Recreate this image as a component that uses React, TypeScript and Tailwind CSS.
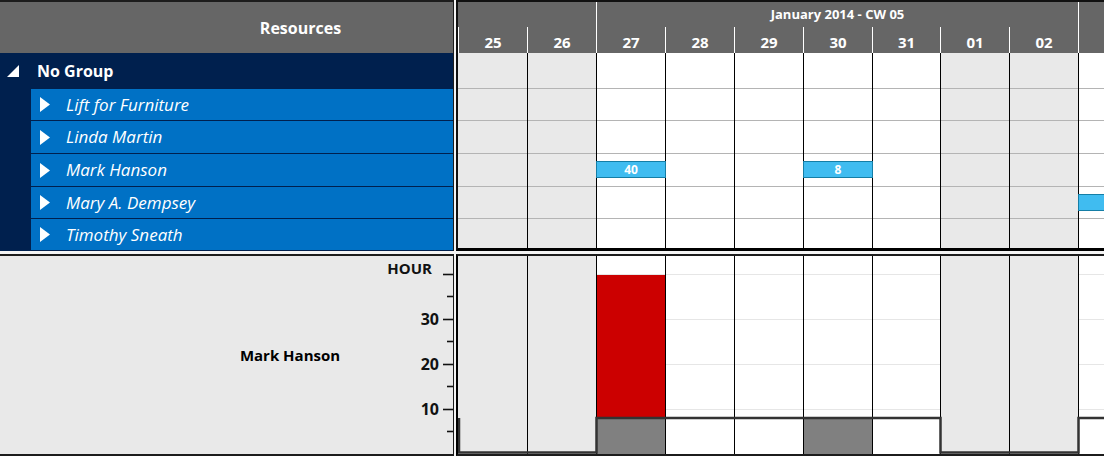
import React from "react";

const days = [
  { label: "25", w: "w-[70px]", weekend: true, first: true },
  { label: "26", w: "w-[69px]", weekend: true },
  { label: "27", w: "w-[69px]" },
  { label: "28", w: "w-[69px]" },
  { label: "29", w: "w-[69px]" },
  { label: "30", w: "w-[69px]" },
  { label: "31", w: "w-[68px]" },
  { label: "01", w: "w-[69px]", weekend: true },
  { label: "02", w: "w-[69px]", weekend: true },
];

// row heights include the 1px bottom line
const rowHeights = ["h-[36px]", "h-[32px]", "h-[33px]", "h-[33px]", "h-[32px]", "h-[29px]"];
const childRowHeights = ["h-[32px]", "h-[33px]", "h-[33px]", "h-[32px]", "h-[32px]"];
const people = ["Lift for Furniture", "Linda Martin", "Mark Hanson", "Mary A. Dempsey", "Timothy Sneath"];

const Bar = ({ label, wide = true }: { label?: string; wide?: boolean }) => (
  <div
    className={`absolute top-[7px] left-[-1px] h-[17px] ${wide ? "w-[70px]" : "w-[27px] h-[16px]"} bg-[#40bcf0] border border-[#157ea6] flex items-center justify-center text-[12px] font-bold text-white leading-none`}
  >
    {label}
  </div>
);

const DayColumn = ({ idx, w, weekend }: { idx: number; w: string; weekend?: boolean }) => (
  <div className={`${w} flex flex-col border-r border-black ${weekend ? "bg-[#e9e9e9]" : "bg-white"}`}>
    {rowHeights.map((h, r) => (
      <div key={r} className={`relative ${h} ${r < rowHeights.length - 1 ? "border-b border-[#b4b4b4]" : ""}`}>
        {r === 3 && idx === 2 && <Bar label="40" />}
        {r === 3 && idx === 5 && <Bar label="8" />}
      </div>
    ))}
  </div>
);

const ResourceTree = () => (
  <div className="w-[454px] h-[251px] border-t-2 border-r border-[#1c1c1c] flex flex-col">
    <div className="h-[51px] bg-[#666666] flex items-center justify-center pl-[148px] text-white text-[16px] font-bold">
      Resources
    </div>
    <div className="h-[36px] bg-[#00204e] flex items-center text-white">
      <svg width="12" height="12" viewBox="0 0 12 12" className="ml-[7px]">
        <polygon points="12,0 12,12 0,12" fill="#fff" />
      </svg>
      <span className="ml-[18px] text-[16px] font-bold">No Group</span>
    </div>
    <div className="flex flex-1 bg-[#00204e]">
      <div className="w-[31px]" />
      <div className="flex-1 flex flex-col">
        {people.map((p, i) => (
          <div
            key={p}
            className={`${childRowHeights[i]} bg-[#0071c5] border-b border-[#00204e] flex items-center text-white`}
          >
            <svg width="10" height="15" viewBox="0 0 10 15" className="ml-[9px]">
              <polygon points="0,0 10,7.5 0,15" fill="#fff" />
            </svg>
            <span className="ml-[16px] text-[17px] italic font-normal">{p}</span>
          </div>
        ))}
      </div>
    </div>
  </div>
);

const Timeline = () => (
  <div className="w-[648px] h-[251px] border-t-2 border-l-2 border-b-[3px] border-[#111] border-b-black flex flex-col bg-white">
    <div className="h-[25px] bg-[#666666] flex text-white">
      <div className="w-[139px] border-r border-white" />
      <div className="w-[482px] border-r border-white flex items-center justify-center text-[13px] font-bold">
        January 2014 - CW 05
      </div>
      <div className="flex-1" />
    </div>
    <div className="h-[26px] bg-[#666666] flex text-white">
      {days.map((d) => (
        <div
          key={d.label}
          className={`${d.w} border-r border-white ${d.first ? "border-l" : ""} flex items-center justify-center pt-[4px] text-[15px] font-bold`}
        >
          {d.label}
        </div>
      ))}
      <div className="flex-1" />
    </div>
    <div className="flex flex-1">
      {days.map((d, i) => (
        <DayColumn key={d.label} idx={i} w={d.w} weekend={d.weekend} />
      ))}
      <div className="flex-1 flex flex-col bg-white">
        {rowHeights.map((h, r) => (
          <div key={r} className={`relative ${h} ${r < rowHeights.length - 1 ? "border-b border-[#b4b4b4]" : ""}`}>
            {r === 4 && <Bar wide={false} />}
          </div>
        ))}
      </div>
    </div>
  </div>
);

const HistogramLegend = () => (
  <div className="w-[454px] h-[202px] border-t-2 border-r border-b-2 border-[#1c1c1c] bg-[#e9e9e9] flex">
    <div className="w-[380px] pl-[200px] flex items-center justify-center text-[15px] font-bold text-black">
      Mark Hanson
    </div>
    <svg width="73" height="198" viewBox="0 0 73 198" className="font-bold">
      <text x="52" y="18" textAnchor="end" fontSize="15" fill="#111">HOUR</text>
      {[
        { y: 63, t: "30" },
        { y: 108, t: "20" },
        { y: 153, t: "10" },
      ].map((m) => (
        <text key={m.t} x="59" y={m.y + 6} textAnchor="end" fontSize="16" fill="#111">
          {m.t}
        </text>
      ))}
      {[18, 63, 108, 153].map((y) => (
        <line key={y} x1="63" x2="73" y1={y + 0.5} y2={y + 0.5} stroke="#111" strokeWidth="1.6" />
      ))}
      {[40, 85, 130, 175].map((y) => (
        <line key={y} x1="67" x2="73" y1={y + 0.5} y2={y + 0.5} stroke="#111" strokeWidth="1.6" />
      ))}
    </svg>
  </div>
);

const Histogram = () => {
  const vlines = [69, 138, 207, 276, 345, 414, 482, 551, 620];
  return (
    <div className="w-[648px] h-[202px] border-t-2 border-l-2 border-b-2 border-[#1c1c1c] border-l-black bg-white">
      <svg width="646" height="198" viewBox="0 0 646 198" className="block">
        <rect x="0" y="0" width="646" height="198" fill="#fff" />
        {[18, 63, 108, 153].map((y) => (
          <line key={y} x1="0" x2="646" y1={y + 0.5} y2={y + 0.5} stroke="#e6e6e6" strokeWidth="1" />
        ))}
        <rect x="0" y="0" width="138" height="198" fill="#e9e9e9" />
        <rect x="482" y="0" width="138" height="198" fill="#e9e9e9" />
        {vlines.map((x) => (
          <line key={x} x1={x + 0.5} x2={x + 0.5} y1="0" y2="198" stroke="#000" strokeWidth="1" />
        ))}
        <rect x="139" y="19" width="68" height="143" fill="#cc0000" />
        <rect x="139" y="162" width="68" height="36" fill="#808080" />
        <rect x="346" y="162" width="68" height="36" fill="#808080" />
        <polyline
          points="1,162 1,196.5 138.5,196.5 138.5,162 482.5,162 482.5,196.5 620.5,196.5 620.5,162 646,162"
          fill="none"
          stroke="#333"
          strokeWidth="2.5"
        />
      </svg>
    </div>
  );
};

export default function App() {
  return (
    <div className="w-[1104px] h-[456px] bg-[#f4f4f4] flex flex-col gap-[3px] overflow-hidden font-['Open_Sans',sans-serif]">
      <div className="flex gap-[2px]">
        <ResourceTree />
        <Timeline />
      </div>
      <div className="flex gap-[2px]">
        <HistogramLegend />
        <Histogram />
      </div>
    </div>
  );
}
